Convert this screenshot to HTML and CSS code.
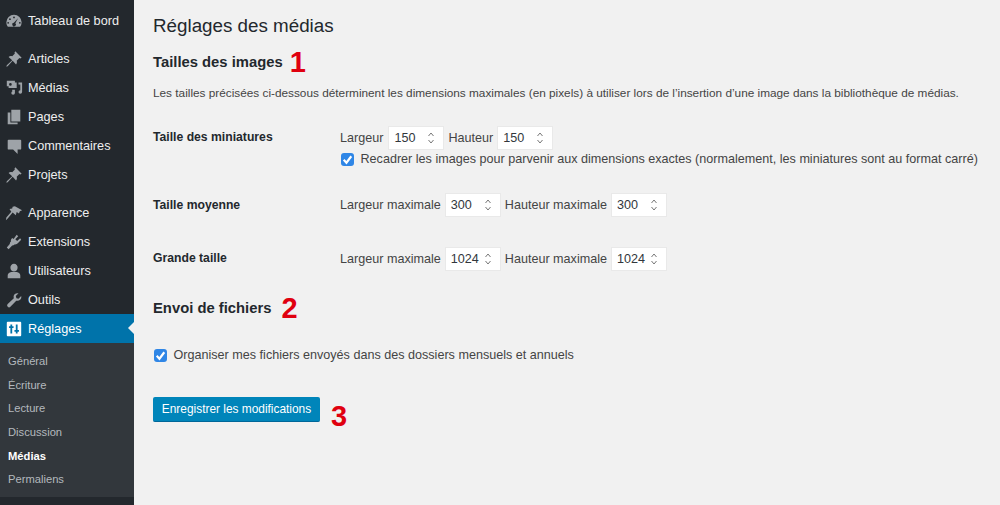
FILE: index.html
```html
<!DOCTYPE html>
<html lang="fr">
<head>
<meta charset="utf-8">
<title>Réglages des médias</title>
<link rel="stylesheet" href="styles.css">
</head>
<body>
<div class="app">
  <nav class="sidebar">
    <ul class="menu first">
      <li class="item"><svg class="ico" viewBox="0 0 20 20"><path fill-rule="evenodd" d="M10 3a8.500 8.500 0 0 0-8.500 8.500c0 2 .6 3.700 1.700 5h13.600a8.400 8.400 0 0 0 1.700-5A8.500 8.500 0 0 0 10 3zm0 2a1 1 0 1 1 0 2 1 1 0 0 1 0-2zM5.500 7a1 1 0 1 1 0 2 1 1 0 0 1 0-2zm9 0l-3 5.500a2 2 0 1 1-1.700-.5zM3.500 11a1 1 0 1 1 0 2 1 1 0 0 1 0-2zm13 0a1 1 0 1 1 0 2 1 1 0 0 1 0-2z"/></svg>Tableau de bord</li>
    </ul>
    <ul class="menu">
      <li class="item"><svg class="ico" viewBox="0 0 20 20"><path d="M11.500 1.500l7 7-1.500 1-1-.5-3 3c.5 1.500.3 3-.7 4L8.500 12 3 18l-1.500.5L2 17l6-5.500L4 7.700c1-1 2.500-1.200 4-.7l3-3-.5-1z"/></svg>Articles</li>
      <li class="item"><svg class="ico" viewBox="0 0 20 20"><path d="M2 2h9v2h2v6H4V8H2zm4 2.500a1.500 1.500 0 1 0 0 3 1.500 1.500 0 0 0 0-3zM15 4h4v10.500a2 2 0 1 1-2-2V6h-2zM8 12h3v3.500a2 2 0 1 1-2-2V14H8z" fill-rule="evenodd"/></svg>Médias</li>
      <li class="item"><svg class="ico" viewBox="0 0 20 20"><path d="M7 2h10v13H7zM3 5h3v11h8v2H3z"/></svg>Pages</li>
      <li class="item"><svg class="ico" viewBox="0 0 20 20"><path d="M4 3h13a1 1 0 0 1 1 1v9a1 1 0 0 1-1 1h-3v5l-5-5H4a1 1 0 0 1-1-1V4a1 1 0 0 1 1-1z"/></svg>Commentaires</li>
      <li class="item"><svg class="ico" viewBox="0 0 20 20"><path d="M11.500 1.500l7 7-1.500 1-1-.5-3 3c.5 1.500.3 3-.7 4L8.500 12 3 18l-1.500.5L2 17l6-5.500L4 7.700c1-1 2.500-1.200 4-.7l3-3-.5-1z"/></svg>Projets</li>
    </ul>
    <ul class="menu">
      <li class="item"><svg class="ico" viewBox="0 0 20 20"><path d="M11 2.500l8 4.500-2.500 1-1 2.500L13 9l-1 3.500-3.500-3L3 16l-2 2 .5-3L7 8.500 5 5.500l3-.5 .5-2z"/></svg>Apparence</li>
      <li class="item"><svg class="ico" viewBox="0 0 20 20"><path d="M13 2l1.700 1.500-3.200 3.500 2 2 3.300-3.300L18 7.500l-3.500 3.700c-1 1-2.200 1.800-4 1.500l-1 1-1.500.3L4 18l-2-2 3.300-3.800.3-1.700 1-1c-.3-1.700.4-2.900 1.400-4l1.500 1.300z"/></svg>Extensions</li>
      <li class="item"><svg class="ico" viewBox="0 0 20 20"><path d="M10 2a4 4 0 0 1 4 4.300c0 2.200-1.800 4.200-4 4.200S6 8.500 6 6.300A4 4 0 0 1 10 2zM7 11h6c2.500.5 4 2 4 4v3H3v-3c0-2 1.500-3.500 4-4z"/></svg>Utilisateurs</li>
      <li class="item"><svg class="ico" viewBox="0 0 20 20"><path d="M18 5.500c.4 1.800-.1 3.300-1.200 4.300-1.200 1.100-2.800 1.400-4.300.9L6 17.500a2.100 2.100 0 0 1-3-3l6.800-6.500c-.5-1.500-.2-3.100.9-4.300 1-1.100 2.500-1.600 4.300-1.200l-3 3 .7 2.500 2.300.5z"/></svg>Outils</li>
      <li class="item current"><svg class="ico" viewBox="0 0 20 20"><path fill-rule="evenodd" d="M3 2h14a1 1 0 0 1 1 1v14a1 1 0 0 1-1 1H3a1 1 0 0 1-1-1V3a1 1 0 0 1 1-1zm3 3v2H4.500v2H6v6h2V9h1.500V7H8V5zm6 0v6h-1.500v2H12v2h2v-2h1.500v-2H14V5z"/></svg>Réglages</li>
    </ul>
    <ul class="submenu">
      <li>Général</li>
      <li>Écriture</li>
      <li>Lecture</li>
      <li>Discussion</li>
      <li class="active">Médias</li>
      <li>Permaliens</li>
    </ul>
  </nav>
  <main class="content">
    <h1 class="page-title">Réglages des médias</h1>
    <div class="section-head first-head"><h2>Tailles des images</h2><span class="num">1</span></div>
    <p class="intro">Les tailles précisées ci-dessous déterminent les dimensions maximales (en pixels) à utiliser lors de l’insertion d’une image dans la bibliothèque de médias.</p>
    <div class="row thumb-row">
      <div class="row-label">Taille des miniatures</div>
      <div class="row-fields">
        <div class="pair">
          <label>Largeur</label>
          <span class="num-input"><span class="val">150</span><svg class="spin" viewBox="0 0 8 14"><path d="M1.500 5L4 2l2.500 3M1.500 9L4 12l2.500-3"/></svg></span>
          <label>Hauteur</label>
          <span class="num-input"><span class="val">150</span><svg class="spin" viewBox="0 0 8 14"><path d="M1.500 5L4 2l2.500 3M1.500 9L4 12l2.500-3"/></svg></span>
        </div>
        <div class="check-line crop">
          <span class="check"><svg viewBox="0 0 12 12"><path d="M2.500 6.300l2.500 2.700 4.500-6"/></svg></span>
          <span>Recadrer les images pour parvenir aux dimensions exactes (normalement, les miniatures sont au format carré)</span>
        </div>
      </div>
    </div>
    <div class="row mid-row">
      <div class="row-label">Taille moyenne</div>
      <div class="pair">
        <label>Largeur maximale</label>
        <span class="num-input"><span class="val">300</span><svg class="spin" viewBox="0 0 8 14"><path d="M1.500 5L4 2l2.500 3M1.500 9L4 12l2.500-3"/></svg></span>
        <label>Hauteur maximale</label>
        <span class="num-input"><span class="val">300</span><svg class="spin" viewBox="0 0 8 14"><path d="M1.500 5L4 2l2.500 3M1.500 9L4 12l2.500-3"/></svg></span>
      </div>
    </div>
    <div class="row big-row">
      <div class="row-label">Grande taille</div>
      <div class="pair">
        <label>Largeur maximale</label>
        <span class="num-input"><span class="val">1024</span><svg class="spin" viewBox="0 0 8 14"><path d="M1.500 5L4 2l2.500 3M1.500 9L4 12l2.500-3"/></svg></span>
        <label>Hauteur maximale</label>
        <span class="num-input"><span class="val">1024</span><svg class="spin" viewBox="0 0 8 14"><path d="M1.500 5L4 2l2.500 3M1.500 9L4 12l2.500-3"/></svg></span>
      </div>
    </div>
    <div class="section-head upload-head"><h2>Envoi de fichiers</h2><span class="num">2</span></div>
    <div class="check-line organise">
      <span class="check"><svg viewBox="0 0 12 12"><path d="M2.500 6.300l2.500 2.700 4.500-6"/></svg></span>
      <span>Organiser mes fichiers envoyés dans des dossiers mensuels et annuels</span>
    </div>
    <div class="actions"><button class="save" type="button">Enregistrer les modifications</button><span class="num">3</span></div>
  </main>
</div>
</body>
</html>
```
FILE: styles.css
```css
* { box-sizing: border-box; }
html, body { margin: 0; height: 505px; overflow: hidden; }
body { font-family: "Liberation Sans", Arial, sans-serif; background: #f1f1f1; color: #444; }
ul { list-style: none; margin: 0; padding: 0; }
.app { display: flex; height: 505px; }
.sidebar { width: 134px; flex: none; background: #23282d; color: #eee; font-size: 12.700px; }
.menu { margin-bottom: 9px; }
.menu.first { padding-top: 6px; }
.item { height: 29px; display: flex; align-items: center; padding-left: 5px; position: relative; }
.ico { width: 18px; height: 18px; margin-right: 5px; fill: #9ea3a8; flex: none; }
.current { background: #0073aa; color: #fff; }
.current .ico { fill: #fff; }
.current::after { content: ""; position: absolute; right: 0; top: 8px; border: 6px solid transparent; border-right: 6px solid #f1f1f1; border-left: 0; }
.submenu { margin-top: -9px; background: #32373c; padding: 6px 0 6px 8px; font-size: 11.200px; color: #b4b9be; }
.submenu li { height: 23.700px; display: flex; align-items: center; }
.submenu .active { color: #fff; font-weight: 700; }
.content { flex: 1; padding-left: 19px; min-width: 0; font-size: 12.600px; }
.page-title { margin: 14px 0 0; font-weight: 400; font-size: 18.800px; line-height: 24px; color: #23282d; }
.section-head { display: flex; align-items: center; gap: 7px; height: 26px; }
.section-head h2 { margin: 0; font-size: 14.800px; font-weight: 700; color: #23282d; }
.first-head { margin-top: 11px; }
.upload-head { margin-top: 25px; gap: 10px; }
.num { color: #e0000f; font-weight: 700; font-size: 29px; line-height: 26px; }
.intro { margin: 10px 0 0; font-size: 11.810px; line-height: 16px; }
.row { display: flex; align-items: flex-start; }
.row-label { width: 187px; flex: none; font-weight: 700; font-size: 12.200px; color: #23282d; line-height: 20px; }
.mid-row .row-label { line-height: 22px; }
.thumb-row { margin-top: 26px; }
.thumb-row label:first-child { margin-right: 1px; }
.mid-row { margin-top: 24px; }
.big-row { margin-top: 32px; }
.pair { display: flex; align-items: center; gap: 5px; height: 22px; }
.num-input { width: 54px; height: 22px; background: #fff; display: flex; align-items: center; justify-content: space-between; padding: 0 8px 0 5px; color: #32373c; box-shadow: 0 0 0 1px #e9e9e9; }
.spin { width: 8px; height: 14px; flex: none; fill: none; stroke: #777; stroke-width: 1; }
.check-line { display: flex; align-items: center; gap: 6.500px; height: 22px; }
.crop { margin-top: -1px; }
.check { width: 13px; height: 13px; margin-left: 1px; border-radius: 3px; background: #2f86e6; display: flex; flex: none; }
.check svg { width: 13px; height: 13px; fill: none; stroke: #fff; stroke-width: 2; }
.organise { margin-top: 23px; }
.actions { display: flex; align-items: flex-start; gap: 11px; margin-top: 31px; }
.actions .num { margin-top: 6px; }
.save { width: 167px; height: 25px; background: #0085ba; border: 0; border-bottom: 1px solid #006799; border-radius: 2px; color: #fff; font: 400 11.900px "Liberation Sans", Arial, sans-serif; padding: 0; }
```
